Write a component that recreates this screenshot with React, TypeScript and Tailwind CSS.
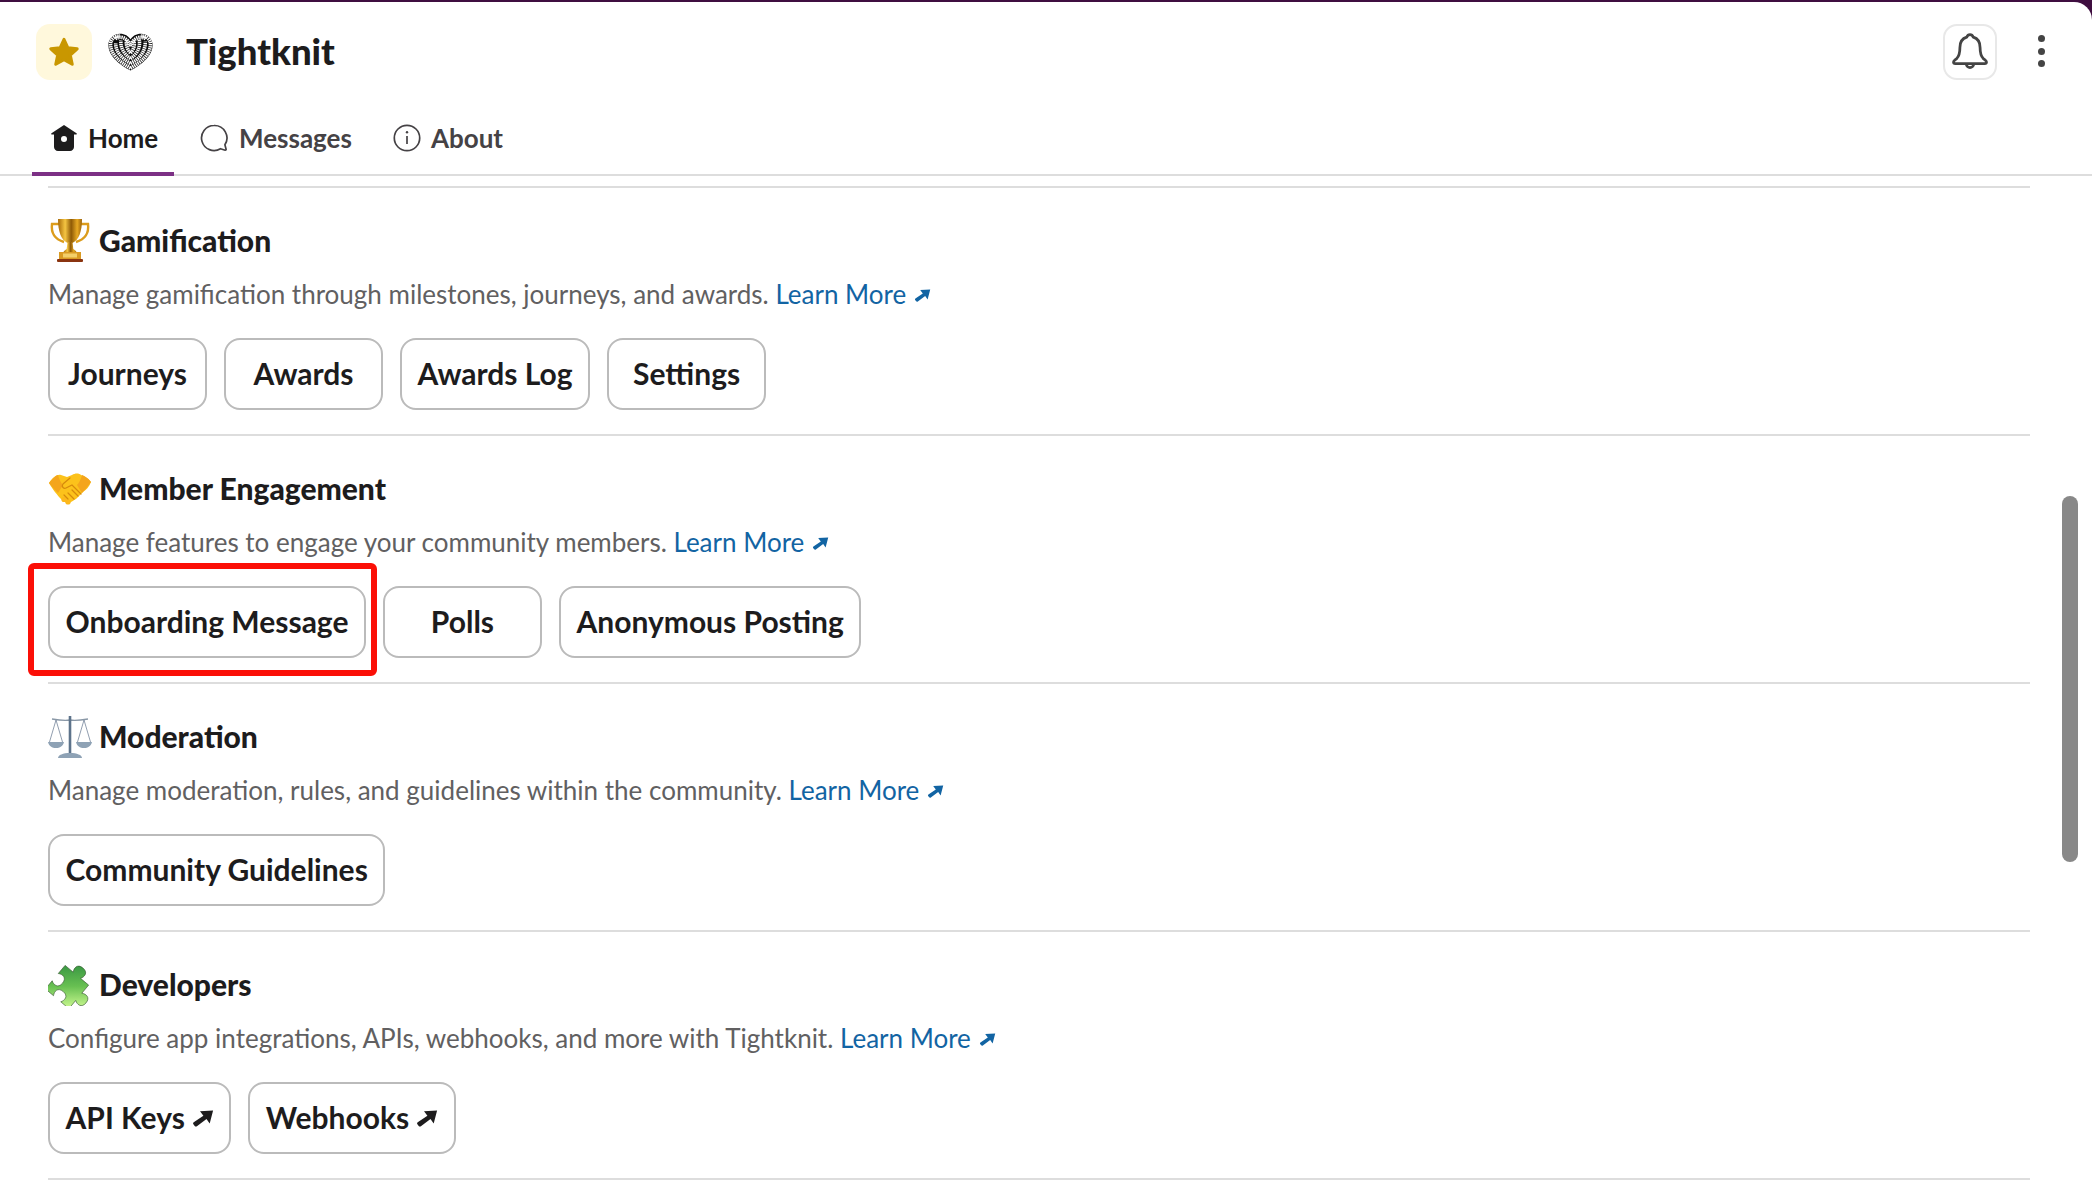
import type { ReactNode } from 'react';

function ExternalArrow({ className }: { className: string }) {
  return (
    <svg viewBox="0 0 21 17" className={className} fill="currentColor">
      <path d="M7.5 1.2 20.6.6l-3.4 13-3.2-4.6-9.6 7.2c-.7.5-1.6.4-2.2-.3L.9 14.300c-.5-.7-.4-1.500.3-2l9.700-6.500z" />
    </svg>
  );
}

function Trophy() {
  return (
    <svg viewBox="0 0 44 44" className="h-[44px] w-[44px] shrink-0">
      <defs>
        <linearGradient id="cup" x1="0" x2="1" y1="0" y2="0">
          <stop offset="0" stopColor="#a86a08" />
          <stop offset="0.3" stopColor="#f5c542" />
          <stop offset="0.55" stopColor="#8f5a06" />
          <stop offset="0.8" stopColor="#e7a923" />
          <stop offset="1" stopColor="#9c6208" />
        </linearGradient>
      </defs>
      <path d="M11 6H4c-1 8 2 15 12 18M33 6h7c1 8-2 15-12 18" fill="none" stroke="#dc9c1c" strokeWidth="2.400" />
      <path d="M10 1h24c0 12-3 21-9.500 24h-5C13 22 10 13 10 1z" fill="url(#cup)" />
      <path d="M19.500 24h5l.8 7c1.500 1.200 2.700 2 3.200 3h-13c.5-1 1.700-1.800 3.200-3z" fill="url(#cup)" />
      <rect x="11" y="34" width="22" height="7" fill="#d99a23" />
      <rect x="15" y="35.500" width="14" height="4" fill="#f3cf6a" />
      <rect x="9" y="41" width="26" height="3" rx="1" fill="#8a3410" />
    </svg>
  );
}

function Handshake() {
  return (
    <svg viewBox="0 0 44 44" className="h-[44px] w-[44px] shrink-0">
      <path d="M1 17 C5 11 9 8 13 9l6 2 5-2c3-2 7-2 9 0 3 1 7 3 10 7-2 5-5 8-8 10l-7 7c-2 1-3 2-5 3-2 2-4 2-6 0-2-1-4-3-6-5-3-4-6-7-10-14z" fill="#fcc21b" />
      <path d="M1 17c3-4 6-7 9-8 1 4 3 8 5 10l-5 8c-3-3-6-6-9-10zM43 16c-3-4-6-6-9-7-1 4-3 8-5 10l5 8c3-3 6-7 9-11z" fill="#f4a51c" />
      <circle cx="20" cy="36" r="2.600" fill="#fcb81c" />
      <circle cx="16" cy="33.500" r="2.600" fill="#fcb81c" />
      <path d="M22 12l-7 6c-2 3 1 5 3 4l6-3 9 9M24 24l6 6M20 27l6 6M16 29l4 4" fill="none" stroke="#d68a0c" strokeWidth="1.200" strokeLinecap="round" />
    </svg>
  );
}

function Scales() {
  return (
    <svg viewBox="0 0 44 44" className="h-[44px] w-[44px] shrink-0">
      <path d="M4 5c6 1 12 2 18 1 6 1 12 0 18-1" fill="none" stroke="#8a98a7" strokeWidth="1.400" />
      <rect x="20.700" y="2" width="2.600" height="37" fill="#5d738b" />
      <path d="M8 6 1.500 28M8 6l6.500 22M36 6l-6.500 22M36 6l6.500 22" fill="none" stroke="#75859a" strokeWidth=".8" />
      <path d="M0 28h16c-1 4-4 6-8 6s-7-2-8-6zM28 28h16c-1 4-4 6-8 6s-7-2-8-6z" fill="#8ea2b5" />
      <path d="M10 44c0-3 5-5 12-5s12 2 12 5z" fill="#8ea2b5" />
    </svg>
  );
}

function Puzzle() {
  return (
    <svg viewBox="0 0 44 44" className="h-[44px] w-[44px] shrink-0">
      <defs>
        <linearGradient id="pz" x1="0.500" x2="0.500" y1="0" y2="1" gradientTransform="rotate(-40 .5 .5)">
          <stop offset="0" stopColor="#3c9a44" />
          <stop offset="0.5" stopColor="#68c052" />
          <stop offset="1" stopColor="#c4f58c" />
        </linearGradient>
      </defs>
      <g transform="translate(19 25) rotate(40) scale(1.180)">
        <path
          d="M-13-13H-4C-6-16-6-21 0-21 6-21 6-16 4-13H13V-4C16-6 21-6 21 0 21 6 16 6 13 4V13H4C6 10 6 5 0 5-6 5-6 10-4 13H-13V4C-10 6-5 6-5 0-5-6-10-6-13-4Z"
          fill="url(#pz)"
          stroke="#35582f"
          strokeWidth=".5"
        />
      </g>
    </svg>
  );
}

function RopeHeart() {
  const strands = [
    'M24 37C12 30 3 22 3 12 3 6 8 3 13 3',
    'M24 32C14 26 8 19 8.500 11',
    'M24 27C17 22 13 15 14 8',
    'M24 21C20 17 19 11 20 7',
    'M24 37C36 30 45 22 45 12 45 6 40 3 35 3',
    'M24 32C34 27 40 19 39.500 9',
    'M24 27C31 22 35 15 33 6',
    'M24 21C28 17 29 11 27 8',
    'M8 6c5-3 13-2 16 8',
    'M40 6c-5-3-13-2-16 8',
  ];
  return (
    <svg viewBox="0 0 48 40" className="h-[38px] w-[47px] shrink-0">
      <path d="M24 39.500C12 33 .7 24 .7 12.500.7 5.500 7 .7 13 .7c5 0 9 2.500 11 6 2-3.500 6-6 11-6 6 0 12.300 4.800 12.300 11.800C47.300 24 36 33 24 39.500z" fill="#0c0c0c" />
      {strands.map((d) => (
        <path key={d} d={d} fill="none" stroke="#fff" strokeWidth="3.800" strokeDasharray="1.500 .7" />
      ))}
    </svg>
  );
}

function SectionButton({ label, external }: { label: string; external?: boolean }) {
  return (
    <div className="flex h-[72px] min-w-[159px] items-center justify-center gap-[7px] rounded-[16px] border-2 border-[#bbbbbb] bg-white px-[15.500px] pb-[1px] text-[30px] font-bold text-[#1d1c1d]">
      {label}
      {external && <ExternalArrow className="mt-[2px] h-[17px] w-[22px]" />}
    </div>
  );
}

function Section({
  icon,
  title,
  description,
  children,
}: {
  icon: ReactNode;
  title: string;
  description: string;
  children: ReactNode;
}) {
  return (
    <section className="h-[248px] border-b-2 border-[#dddddd] pt-[30px]">
      <div className="flex h-[44px] items-center gap-[7px]">
        {icon}
        <h2 className="text-[30px] font-black leading-none text-[#1d1c1d]">{title}</h2>
      </div>
      <p className="mt-[15px] h-[35px] text-[26px] leading-[35px] text-[#616061]">
        {description}{' '}
        <a className="text-[#1264a3]">
          Learn More
          <ExternalArrow className="ml-[8px] inline h-[13px] w-[17px] align-[2px]" />
        </a>
      </p>
      <div className="mt-[26px] flex gap-[17px]">{children}</div>
    </section>
  );
}

export default function App() {
  return (
    <div className="relative h-[1190px] w-full overflow-hidden bg-[#3f0e40] pt-[2px] font-['Lato','Liberation_Sans',sans-serif] [font-variant-ligatures:common-ligatures]">
      <div className="flex h-full flex-col rounded-tr-[18px] bg-white">
        <header className="flex h-[102px] shrink-0 items-start pl-[36px] pr-[47px] pt-[22px]">
          <div className="flex h-[56px] w-[56px] items-center justify-center rounded-[14px] bg-[#fff8dc]">
            <svg viewBox="0 0 24 24" className="h-[36px] w-[36px]">
              <path
                d="M12 3.500l2.600 5.700 6.200.7-4.600 4.200 1.300 6.100-5.500-3.100-5.500 3.100 1.300-6.100-4.600-4.200 6.200-.7z"
                fill="#c99700"
                stroke="#c99700"
                strokeWidth="2"
                strokeLinejoin="round"
              />
            </svg>
          </div>
          <div className="ml-[15px] mt-[9px]">
            <RopeHeart />
          </div>
          <h1 className="ml-[32px] mt-[4px] text-[36.500px] font-black leading-[46px] text-[#1d1c1d]">Tightknit</h1>
          <div className="ml-auto flex h-[56px] w-[54px] items-center justify-center rounded-[14px] border-2 border-[#e8e8e8]">
            <svg viewBox="0 0 24 24" className="h-[44px] w-[44px]" fill="none" stroke="#444444" strokeWidth="1.500" strokeLinejoin="round">
              <path d="M12 2.500c-.9 0-1.500.6-1.800 1.400C7.600 4.700 6.500 6.800 6.500 9.500c0 3-.6 4.800-1.700 6-.6.6-1.800 1.200-1.800 2 0 .5.4.8 1 .8h16c.6 0 1-.3 1-.8 0-.8-1.200-1.400-1.800-2-1.100-1.200-1.700-3-1.700-6 0-2.700-1.100-4.800-3.700-5.600-.3-.8-.9-1.400-1.800-1.400z" />
              <path d="M10 18.500c0 1.200 1 2 2 2s2-.8 2-2" />
            </svg>
          </div>
          <div className="ml-[41px] mt-[11px] flex flex-col gap-[5.500px]">
            <span className="h-[7px] w-[7px] rounded-full bg-[#444444]" />
            <span className="h-[7px] w-[7px] rounded-full bg-[#444444]" />
            <span className="h-[7px] w-[7px] rounded-full bg-[#444444]" />
          </div>
        </header>

        <nav className="flex h-[72px] shrink-0 border-b-2 border-[#dddddd] pl-[32px] text-[26px] font-bold">
          <div className="-mb-[2px] flex w-[142px] items-center gap-[10px] border-b-4 border-[#7c3085] pl-[18px] text-[#1d1c1d]">
            <svg viewBox="0 0 28 28" className="h-[28px] w-[28px]" fill="#1d1c1d">
              <path d="M14 1 1.500 9.200c-.6.400-.3 1.300.4 1.300H4V23c0 2.200 1.800 4 4 4h12c2.200 0 4-1.800 4-4V10.500h2.100c.7 0 1-.9.4-1.300z" />
              <circle cx="14" cy="15" r="3" fill="#fff" />
            </svg>
            Home
          </div>
          <div className="ml-[26px] flex items-center gap-[11px] pb-[2px] text-[#454245]">
            <svg viewBox="0 0 28 28" className="h-[28px] w-[28px]" fill="none" stroke="#454245" strokeWidth="1.700" strokeLinejoin="round">
              <path d="M14 1.500a12.500 12.500 0 1 0 6.500 23.200l4.700 1.500c.6.100 1-.3.900-.9l-1.200-4.500A12.500 12.500 0 0 0 14 1.500z" />
            </svg>
            Messages
          </div>
          <div className="ml-[41px] flex items-center gap-[10px] pb-[2px] text-[#454245]">
            <svg viewBox="0 0 28 28" className="h-[28px] w-[28px]" fill="none" stroke="#454245" strokeWidth="1.700">
              <circle cx="14" cy="14" r="12.700" />
              <path d="M14 12v8" />
              <circle cx="14" cy="8.300" r="1.200" fill="#454245" stroke="none" />
            </svg>
            About
          </div>
        </nav>

        <main className="ml-[48px] mr-[62px] mt-[10px] border-t-2 border-[#dddddd]">
          <Section
            icon={<Trophy />}
            title="Gamification"
            description="Manage gamification through milestones, journeys, and awards."
          >
            <SectionButton label="Journeys" />
            <SectionButton label="Awards" />
            <SectionButton label="Awards Log" />
            <SectionButton label="Settings" />
          </Section>
          <Section
            icon={<Handshake />}
            title="Member Engagement"
            description="Manage features to engage your community members."
          >
            <div className="relative">
              <SectionButton label="Onboarding Message" />
              <div className="absolute -bottom-[18px] -left-[20px] -right-[11px] -top-[23px] rounded-[6px] border-[6px] border-[#fb0f07]" />
            </div>
            <SectionButton label="Polls" />
            <SectionButton label="Anonymous Posting" />
          </Section>
          <Section
            icon={<Scales />}
            title="Moderation"
            description="Manage moderation, rules, and guidelines within the community."
          >
            <SectionButton label="Community Guidelines" />
          </Section>
          <Section
            icon={<Puzzle />}
            title="Developers"
            description="Configure app integrations, APIs, webhooks, and more with Tightknit."
          >
            <SectionButton label="API Keys" external />
            <SectionButton label="Webhooks" external />
          </Section>
        </main>
      </div>
      <div className="absolute left-[2062px] top-[496px] h-[366px] w-[16px] rounded-full bg-[#888888]" />
    </div>
  );
}
